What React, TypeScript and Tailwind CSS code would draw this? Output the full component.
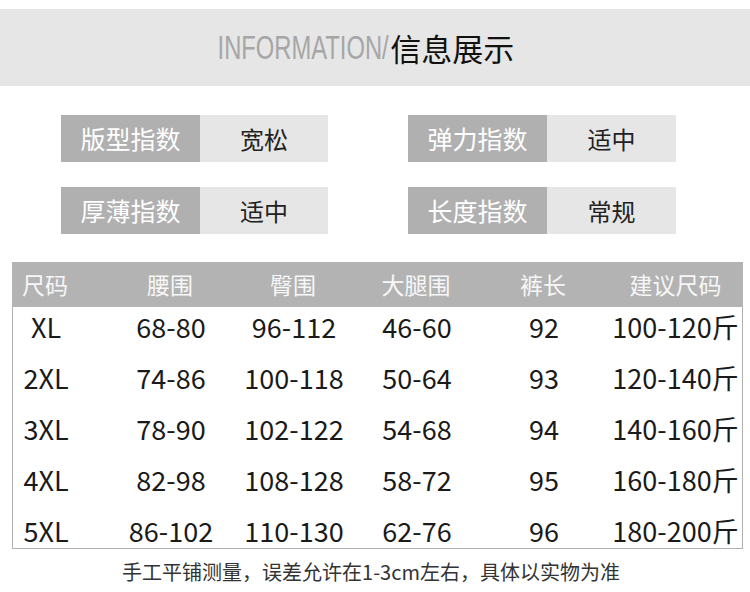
import React from "react";

const infos: [string, string][] = [
  ["版型指数", "宽松"],
  ["弹力指数", "适中"],
  ["厚薄指数", "适中"],
  ["长度指数", "常规"],
];

const head = ["尺码", "腰围", "臀围", "大腿围", "裤长", "建议尺码"];

const rows = [
  ["XL", "68-80", "96-112", "46-60", "92", "100-120斤"],
  ["2XL", "74-86", "100-118", "50-64", "93", "120-140斤"],
  ["3XL", "78-90", "102-122", "54-68", "94", "140-160斤"],
  ["4XL", "82-98", "108-128", "58-72", "95", "160-180斤"],
  ["5XL", "86-102", "110-130", "62-76", "96", "180-200斤"],
];

const cols = "grid grid-cols-[96px_124px_122px_124px_130px_1fr]";

export default function App() {
  return (
    <div className="w-[750px] h-[592px] bg-white pt-[9px] overflow-hidden font-['Noto_Sans_CJK_SC','Liberation_Sans',sans-serif]">
      <div className="h-[77px] bg-[#e6e6e6] flex items-center justify-center pr-[18px]">
        <span className="inline-block origin-right scale-x-[0.72] -ml-[67px] text-[33px] leading-none text-[#a6a6a6] font-['Liberation_Sans',sans-serif]">
          INFORMATION/
        </span>
        <span className="text-[31px] leading-none text-[#111] ml-[2px]">信息展示</span>
      </div>

      <div className="mt-[29px] ml-[61px] grid grid-cols-[267px_268px] gap-x-[80px] gap-y-[25px]">
        {infos.map(([k, v]) => (
          <div key={k} className="flex h-[47px]">
            <div className="w-[139px] bg-[#b0b0b0] text-white text-[25px] flex items-center justify-center">
              {k}
            </div>
            <div className="flex-1 bg-[#e6e6e6] text-[24px] text-[#222] flex items-center justify-center">
              {v}
            </div>
          </div>
        ))}
      </div>

      <div className="mt-[28px] ml-[12px] w-[731px]">
        <div className={`${cols} h-[45px] bg-[#b3b3b3] items-center text-[23px] text-[#f7f7f7]`}>
          {head.map((h, i) => (
            <div key={h} className={`flex justify-center ${i === 0 ? "pr-[30px]" : ""}`}>
              {h}
            </div>
          ))}
        </div>
        <div className="border-x border-b border-[#b0b0b0]">
          {rows.map((r, ri) => (
            <div
              key={r[0]}
              className={`${cols} ${ri === rows.length - 1 ? "h-[37px]" : "h-[51px]"} pt-[5px] items-start text-[27px] leading-[30px] text-[#1a1a1a]`}
            >
              {r.map((c, i) => (
                <div key={i} className={`flex justify-center whitespace-nowrap ${i === 0 ? "pr-[30px]" : ""}`}>
                  {c}
                </div>
              ))}
            </div>
          ))}
        </div>
      </div>

      <p className="mt-[9px] pr-[8px] text-center text-[20px] leading-[28px] text-[#333]">
        手工平铺测量，误差允许在1-3cm左右，具体以实物为准
      </p>
    </div>
  );
}
